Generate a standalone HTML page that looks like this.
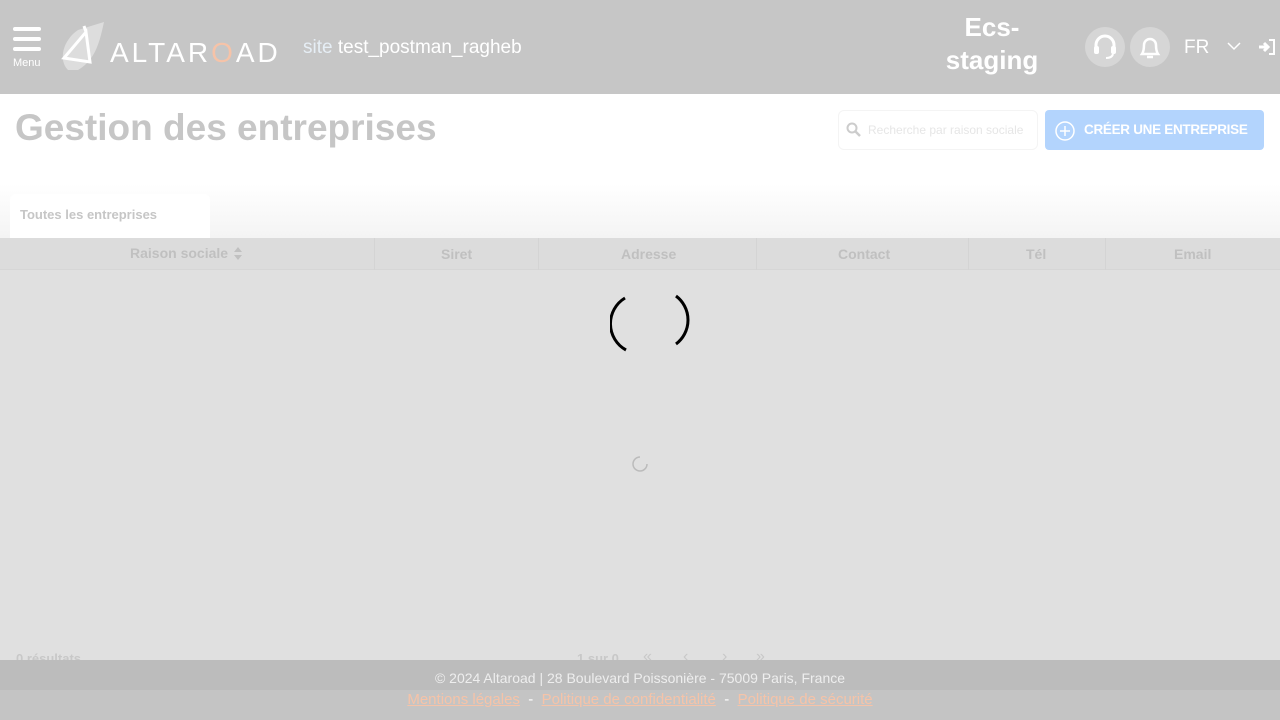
<!DOCTYPE html>
<html><head><meta charset="utf-8"><style>
*{margin:0;padding:0;box-sizing:border-box}
body{width:1280px;height:720px;overflow:hidden;font-family:"Liberation Sans",sans-serif;background:#e0e0e0;position:relative}
.hdr{position:absolute;left:0;top:0;width:1280px;height:94px;background:#c6c6c6;color:#fff}
.top{position:absolute;left:0;top:94px;width:1280px;height:144px;background:linear-gradient(#fff 0,#fff 90px,#f4f4f4 144px)}
.abs{position:absolute}
</style></head><body>
<div class="hdr">
  <div class="abs" style="left:13px;top:27px;width:28px;height:4px;background:#fff;border-radius:2px"></div>
  <div class="abs" style="left:13px;top:37px;width:28px;height:4px;background:#fff;border-radius:2px"></div>
  <div class="abs" style="left:13px;top:47px;width:28px;height:4px;background:#fff;border-radius:2px"></div>
  <div class="abs" style="left:13px;top:57px;font-size:11px">Menu</div>
  <svg class="abs" style="left:58px;top:20px" width="56" height="54" viewBox="0 0 56 54">
    <path d="M10 50 C0 40 5 20 20 10 L46 2 C42 20 38 40 20 50 Z" fill="#ddd"/>
    <path d="M6 38 L28 12 L32 42 Z M28 12 L26 6" stroke="#fff" stroke-width="3" fill="none"/>
  </svg>
  <div class="abs" style="left:110px;top:37px;font-size:28px;letter-spacing:3px;font-weight:300">ALTAR<span style="color:#f6c3a8">O</span>AD</div>
  <div class="abs" style="left:303px;top:37px;font-size:19px"><span style="color:#e6eef5">site</span> test_postman_ragheb</div>
  <div class="abs" style="left:940px;top:11px;width:104px;text-align:center;font-size:26px;font-weight:bold;line-height:33px">Ecs-<br>staging</div>
  <div class="abs" style="left:1085px;top:27px;width:40px;height:40px;border-radius:50%;background:#d6d6d6"></div>
  <svg class="abs" style="left:1089px;top:31px" width="32" height="32" viewBox="0 0 32 32"><path d="M7 18 V14 a9 9 0 0 1 18 0 V18" stroke="#fff" stroke-width="3" fill="none"/><rect x="5" y="15" width="5" height="8" rx="2" fill="#fff"/><rect x="22" y="15" width="5" height="8" rx="2" fill="#fff"/><path d="M24 23 Q23 27 17 27" stroke="#fff" stroke-width="2" fill="none"/></svg>
  <div class="abs" style="left:1130px;top:27px;width:40px;height:40px;border-radius:50%;background:#d6d6d6"></div>
  <svg class="abs" style="left:1134px;top:31px" width="32" height="32" viewBox="0 0 32 32"><path d="M8 23 Q10 20 10 14 a6 6 0 0 1 12 0 Q22 20 24 23 Z" stroke="#fff" stroke-width="2.5" fill="none"/><path d="M13 26 h6" stroke="#fff" stroke-width="2.5"/></svg>
  <div class="abs" style="left:1184px;top:37px;font-size:19px">FR</div>
  <svg class="abs" style="left:1227px;top:41px" width="14" height="10"><path d="M1 2 L7 8 L13 2" stroke="#fff" stroke-width="1.5" fill="none"/></svg>
  <svg class="abs" style="left:1258px;top:38px" width="18" height="18" viewBox="0 0 18 18"><path d="M1 9 H9 M6 5 L10 9 L6 13" stroke="#fff" stroke-width="3" fill="none"/><path d="M11 2 H16 V16 H11" stroke="#fff" stroke-width="2" fill="none"/></svg>
</div>
<div class="top">
  <div class="abs" style="left:15px;top:13px;font-size:37px;font-weight:bold;color:#c6c6c6">Gestion des entreprises</div>
  <div class="abs" style="left:838px;top:16px;width:200px;height:40px;border:1px solid #f4f4f4;border-radius:6px;background:#fff"></div>
  <svg class="abs" style="left:846px;top:28px" width="16" height="16"><circle cx="6" cy="6" r="4.5" stroke="#ccc" stroke-width="2" fill="none"/><path d="M9.5 9.5 L14 14" stroke="#ccc" stroke-width="2.5"/></svg>
  <div class="abs" style="left:868px;top:29px;font-size:12px;color:#e6e6e6">Recherche par raison sociale</div>
  <div class="abs" style="left:1045px;top:16px;width:219px;height:40px;border-radius:4px;background:#b3d4fd"></div>
  <svg class="abs" style="left:1054px;top:26px" width="22" height="22"><circle cx="11" cy="11" r="9" stroke="#fff" stroke-width="1.5" fill="none"/><path d="M11 6 V16 M6 11 H16" stroke="#fff" stroke-width="1.5"/></svg>
  <div class="abs" style="left:1084px;top:28px;font-size:13.5px;font-weight:bold;color:#fff;letter-spacing:-0.3px">CRÉER UNE ENTREPRISE</div>
  <div class="abs" style="left:10px;top:100px;width:200px;height:44px;background:#fff;border-radius:6px 6px 0 0"></div>
  <div class="abs" style="left:20px;top:113px;font-size:13px;font-weight:bold;color:#c6c6c6">Toutes les entreprises</div>
</div>
<div class="abs" style="left:0;top:238px;width:1280px;height:32px;background:#dcdcdc;border-bottom:1px solid #d6d6d6;font-size:14px;font-weight:bold;color:#c0c0c0">
  <div class="abs" style="left:374px;top:0;width:1px;height:32px;background:#d4d4d4"></div>
  <div class="abs" style="left:538px;top:0;width:1px;height:32px;background:#d4d4d4"></div>
  <div class="abs" style="left:756px;top:0;width:1px;height:32px;background:#d4d4d4"></div>
  <div class="abs" style="left:968px;top:0;width:1px;height:32px;background:#d4d4d4"></div>
  <div class="abs" style="left:1105px;top:0;width:1px;height:32px;background:#d4d4d4"></div>
  <div class="abs" style="left:130px;top:7px">Raison sociale</div>
  <svg class="abs" style="left:233px;top:8px" width="10" height="16"><path d="M1 6 L5 1 L9 6 Z M1 9 L5 14 L9 9 Z" fill="#c0c0c0"/></svg>
  <div class="abs" style="left:441px;top:8px">Siret</div>
  <div class="abs" style="left:621px;top:8px">Adresse</div>
  <div class="abs" style="left:838px;top:8px">Contact</div>
  <div class="abs" style="left:1026px;top:8px">Tél</div>
  <div class="abs" style="left:1174px;top:8px">Email</div>
</div>
<svg class="abs" style="left:610px;top:292px" width="80" height="64"><path d="M15 6 A30 30 0 0 0 16 58" stroke="#000" stroke-width="3" fill="none"/><path d="M66 4 A30 30 0 0 1 66 52" stroke="#000" stroke-width="3" fill="none"/></svg>
<svg class="abs" style="left:632px;top:456px" width="16" height="16"><path d="M8 1 A7 7 0 1 0 15 8" stroke="#bbb" stroke-width="1.5" fill="none"/></svg>
<div class="abs" style="left:16px;top:651px;font-size:13px;font-weight:bold;color:#c8c8c8">0 résultats</div>
<div class="abs" style="left:577px;top:651px;font-size:13px;font-weight:bold;color:#c8c8c8">1 sur 0</div>
<div class="abs" style="left:643px;top:648px;font-size:16px;color:#c8c8c8">«</div>
<div class="abs" style="left:683px;top:648px;font-size:16px;color:#c8c8c8">‹</div>
<div class="abs" style="left:722px;top:648px;font-size:16px;color:#c8c8c8">›</div>
<div class="abs" style="left:756px;top:648px;font-size:16px;color:#c8c8c8">»</div>
<div class="abs" style="left:0;top:660px;width:1280px;height:30px;background:#bcbcbc;color:#eee;font-size:14px;text-align:center;padding-top:10px">© 2024 Altaroad | 28 Boulevard Poissonière - 75009 Paris, France</div>
<div class="abs" style="left:0;top:690px;width:1280px;height:30px;background:#c4c4c4;color:#fff;font-size:15px;text-align:center;padding-top:1px"><u style="color:#f6c3a8">Mentions légales</u> &nbsp;-&nbsp; <u style="color:#f6c3a8">Politique de confidentialité</u> &nbsp;-&nbsp; <u style="color:#f6c3a8">Politique de sécurité</u></div>
</body></html>
